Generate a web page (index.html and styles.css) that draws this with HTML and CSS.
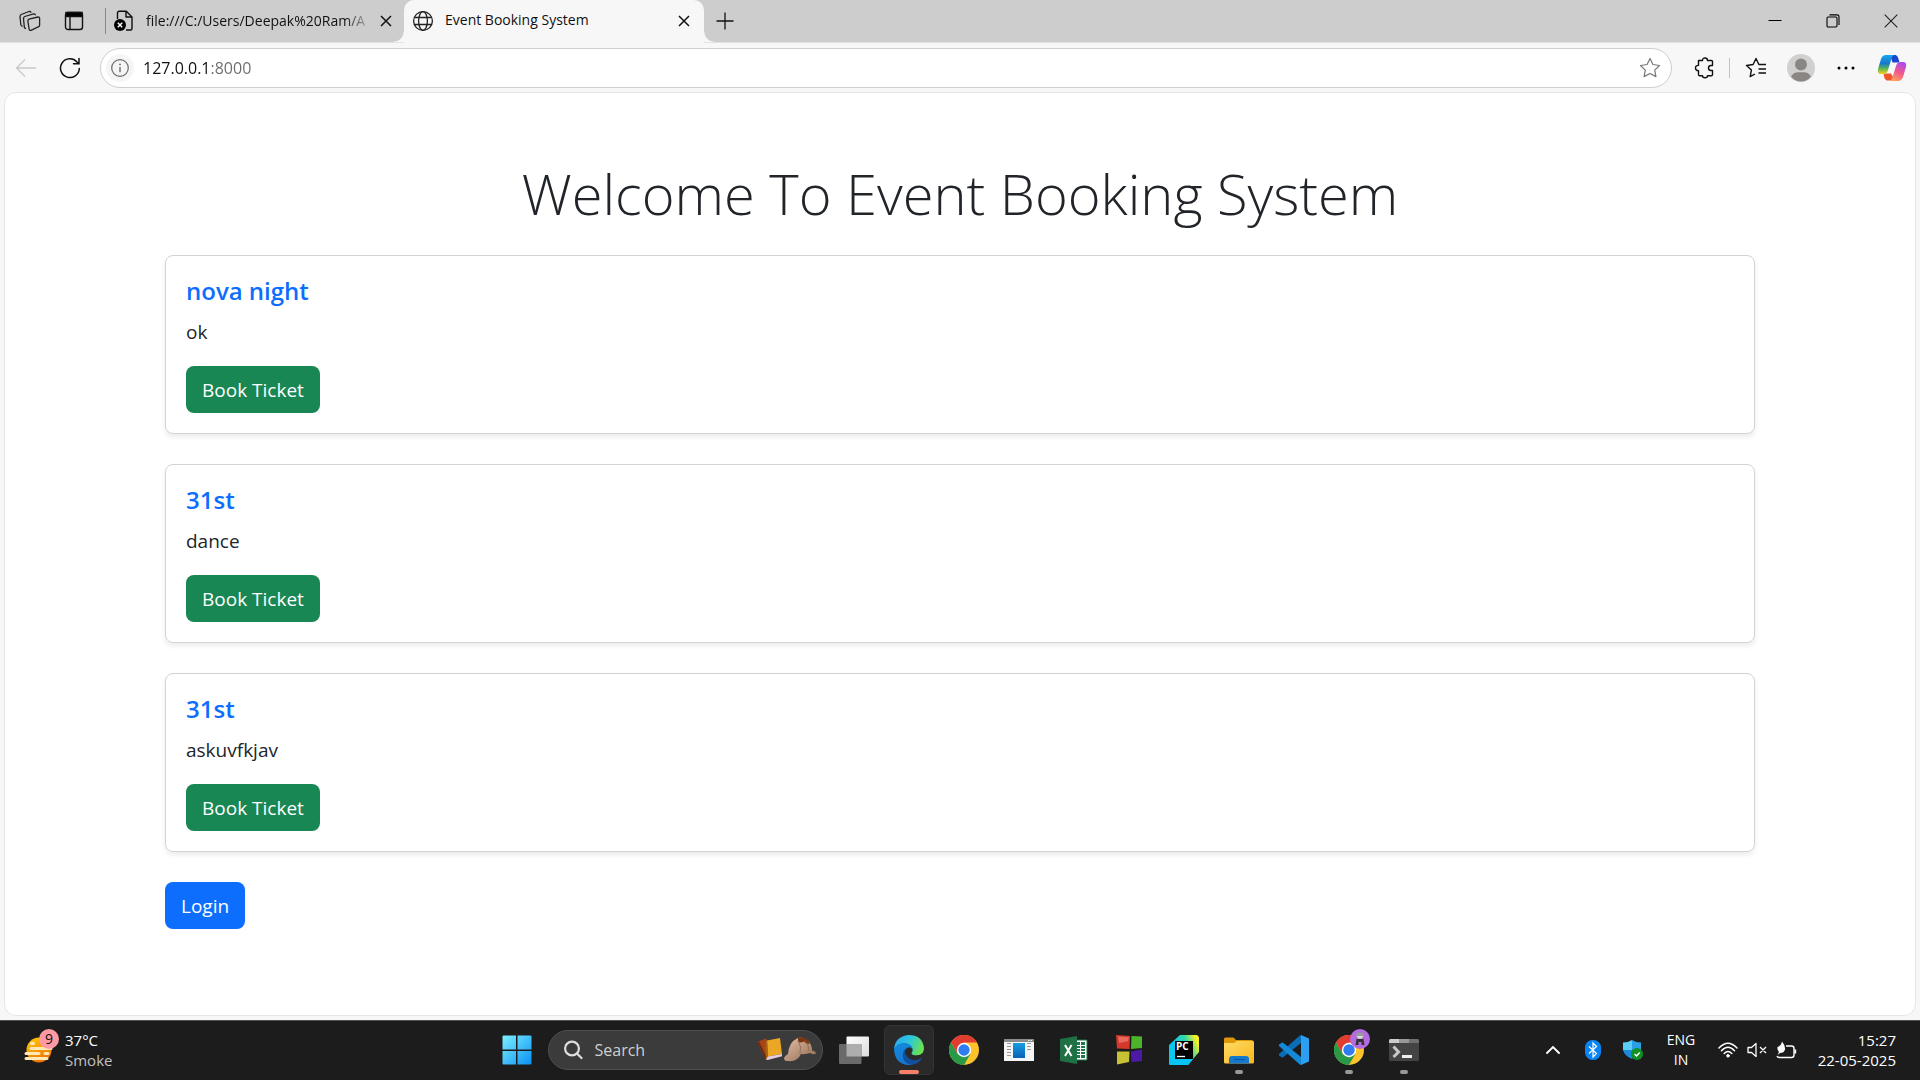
FILE: index.html
```
<!DOCTYPE html>
<html lang="en">
<head>
<meta charset="utf-8">
<meta name="viewport" content="width=device-width, initial-scale=1">
<title>Event Booking System</title>
<link rel="stylesheet" href="styles.css">
</head>
<body>
<header class="browser">
  <div class="tab-strip">
    <button class="icon-btn strip-btn" aria-label="Workspaces">
      <svg width="22" height="22" viewBox="0 0 22 22" fill="none" stroke="#222" stroke-width="1.3" stroke-linejoin="round" stroke-linecap="round"><path d="M10 9.2 19 7q1.6-.2 1.6 1.200v7q0 1-.9 1.500L12 20.300q-1.500.4-1.800-1l-1.300-8q-.1-1.500 1.100-2.100zM6.500 18.500Q5.500 18 5.300 17L4.500 8.500q0-1.500 1.300-2l8.700-2.600q1.300-.2 1.800.9M3 16.200Q2 15.700 1.800 14.500L1 6.500Q1 5 2.200 4.500L10 1.500q1.300-.3 1.900.7"/></svg>
    </button>
    <button class="icon-btn strip-btn" aria-label="Tab actions">
      <svg width="20" height="20" viewBox="0 0 20 20" fill="none" stroke="#111" stroke-width="1.400"><rect x="1.500" y="1.500" width="17" height="17" rx="2.500"/><path d="M2 1.500h16v4H2z" fill="#000"/><path d="M6 6v12"/></svg>
    </button>
    <div class="tab">
      <svg width="22" height="22" viewBox="0 0 22 22" fill="none" stroke="#111" stroke-width="1.400" stroke-linejoin="round"><path d="M4.500 9V3q0-1.800 1.800-1.800h7L19 7v11.500q0 1.500-1.500 1.500H13M13 1.500V7h6"/><circle cx="7" cy="15" r="6" fill="#000" stroke="none"/><path d="m4.800 12.800 4.400 4.400m0-4.400-4.400 4.400" stroke="#fff"/></svg>
      <span class="tab-title tab-title-cut">file:///C:/Users/Deepak%20Ram/A</span>
      <button class="icon-btn tab-close" aria-label="Close tab"><svg width="12" height="12" viewBox="0 0 12 12" stroke="#111" stroke-width="1.500"><path d="m1 1 10 10M11 1 1 11"/></svg></button>
    </div>
    <div class="tab tab-active">
      <svg width="22" height="22" viewBox="0 0 22 22" fill="none" stroke="#222" stroke-width="1.300"><circle cx="11" cy="11" r="9.400"/><ellipse cx="11" cy="11" rx="4.400" ry="9.400"/><path d="M2.500 7.500h17M2.500 14.500h17"/></svg>
      <span class="tab-title">Event Booking System</span>
      <button class="icon-btn tab-close" aria-label="Close tab"><svg width="12" height="12" viewBox="0 0 12 12" stroke="#111" stroke-width="1.500"><path d="m1 1 10 10M11 1 1 11"/></svg></button>
    </div>
    <button class="icon-btn new-tab" aria-label="New tab"><svg width="18" height="18" viewBox="0 0 18 18" stroke="#111" stroke-width="1.300"><path d="M9 .5v17M.5 9h17"/></svg></button>
    <div class="window-controls">
      <button class="icon-btn win-btn" aria-label="Minimize"><svg width="14" height="14" viewBox="0 0 14 14" stroke="#000"><path d="M.5 6.500h13"/></svg></button>
      <button class="icon-btn win-btn" aria-label="Restore"><svg width="14" height="14" viewBox="0 0 14 14" stroke="#000" fill="none" stroke-width="1.100"><rect x="1" y="3" width="10" height="10" rx="1.200"/><path d="M3.500.9H11q2 0 2 2v8"/></svg></button>
      <button class="icon-btn win-btn" aria-label="Close"><svg width="14" height="14" viewBox="0 0 14 14" stroke="#222" stroke-width="1.100"><path d="m.7.7 12.600 12.600m0-12.600L.7 13.300"/></svg></button>
    </div>
  </div>
  <div class="toolbar">
    <button class="icon-btn nav-btn" aria-label="Back" disabled><svg width="22" height="20" viewBox="0 0 22 20" fill="none" stroke="#c9c9c9" stroke-width="1.300"><path d="M21 10H1.500M10 1.500 1.500 10l8.500 8.500"/></svg></button>
    <button class="icon-btn nav-btn" aria-label="Refresh"><svg width="22" height="22" viewBox="0 0 22 22" fill="none" stroke="#111" stroke-width="1.500" stroke-linecap="round"><path d="M20.300 11.500A9.400 9.400 0 1 1 18 5l1.500 1.500M20 1.500v5.200h-5.500"/></svg></button>
    <form class="address">
      <button type="button" class="icon-btn site-info" aria-label="View site information"><svg width="18" height="18" viewBox="0 0 18 18" fill="none" stroke="#6b6b6b" stroke-width="1.200"><circle cx="9" cy="9" r="8.300"/><path d="M9 8v5.200" stroke-width="1.400"/><circle cx="9" cy="5.400" r=".9" fill="#6b6b6b" stroke="none"/></svg></button>
      <input class="address-input" type="text" aria-label="Address" value="127.0.0.1:8000">
      <button type="button" class="icon-btn favorite" aria-label="Add to favorites"><svg width="22" height="22" viewBox="0 0 22 22" fill="none" stroke="#777" stroke-width="1.200" stroke-linejoin="round"><path d="m11 1.500 2.900 6 6.600 1-4.800 4.600 1.200 6.500-5.900-3.100-5.900 3.100 1.200-6.500L1.500 8.500l6.600-1z"/></svg></button>
    </form>
    <div class="toolbar-actions">
      <button class="icon-btn tool-btn" aria-label="Extensions"><svg width="22" height="22" viewBox="0 0 22 22" fill="none" stroke="#111" stroke-width="1.400" stroke-linejoin="round"><path d="M4.500 3.500h4q0-2.500 2.500-2.500t2.500 2.500h4q1 0 1 1v4h-1.500q-2.500 0-2.500 2.500t2.500 2.500h1.500v4q0 1.200-1.200 1.200h-3.800q0 2-2.500 2t-2.500-2H5.700q-1.200 0-1.200-1.200v-3.800Q1.500 13.700 1.500 11t3-2.600z"/></svg></button>
      <span class="tool-separator"></span>
      <button class="icon-btn tool-btn fav-btn" aria-label="Favorites"><svg width="22" height="22" viewBox="0 0 22 22" fill="none" stroke="#111" stroke-width="1.400" stroke-linejoin="round"><path d="M10 17 5.200 19.600l1.200-6.500L1.500 8.500l6.600-1 2.900-6 2.900 6H21M13.500 12H21M13.500 16H21"/></svg></button>
      <button class="icon-btn tool-btn" aria-label="Profile"><svg width="28" height="28" viewBox="0 0 28 28"><circle cx="14" cy="14" r="14" fill="#d2d0ce"/><circle cx="14" cy="10.500" r="6" fill="#8a8683"/><path d="M4 22.500q2.500-4.300 7-4.300h6q4.500 0 7 4.300-4 5-10 5t-10-5z" fill="#8a8683"/></svg></button>
      <button class="icon-btn tool-btn" aria-label="Settings and more"><svg width="18" height="4" viewBox="0 0 18 4"><circle cx="2" cy="2" r="1.500"/><circle cx="9" cy="2" r="1.500"/><circle cx="16" cy="2" r="1.500"/></svg></button>
      <button class="icon-btn tool-btn copilot-btn" aria-label="Copilot">
        <svg width="30" height="28" viewBox="0 0 30 28">
          <defs>
            <linearGradient id="cp1" x1="0" y1="0" x2="0" y2="1"><stop offset="0" stop-color="#1aa5f0"/><stop offset=".45" stop-color="#1778c8"/><stop offset=".7" stop-color="#58b45a"/><stop offset="1" stop-color="#f4cf1c"/></linearGradient>
            <linearGradient id="cp2" x1=".7" y1="0" x2=".3" y2="1"><stop offset="0" stop-color="#a84df0"/><stop offset=".5" stop-color="#f0568e"/><stop offset="1" stop-color="#ffa05c"/></linearGradient>
          </defs>
          <path d="M13 1h5.500q2 .3 2.700 3l1.300 4.500h-7z" fill="#1c45cc"/>
          <path d="M9.500 26.500q-1.500-.8-2.200-3L6.500 19.500h7.500l4 7z" fill="#f0562c"/>
          <path d="M9 1h8q-1.700 1-2.600 4L11 16q-1.300 4-4 4H4q-4 0-3-5L4 5q1.300-4 5-4z" fill="url(#cp1)"/>
          <path d="M21 27h-8q1.700-1 2.600-4L19 12q1.300-4 4-4h3q4 0 3 5l-3 10q-1.300 4-5 4z" fill="url(#cp2)"/>
        </svg>
      </button>
    </div>
  </div>
</header>

<main class="viewport">
  <div class="container">
    <h1 class="page-title">Welcome To Event Booking System</h1>
    <article class="card">
      <h2 class="card-title">nova night</h2>
      <p class="card-text">ok</p>
      <button class="btn btn-success">Book Ticket</button>
    </article>
    <article class="card">
      <h2 class="card-title">31st</h2>
      <p class="card-text">dance</p>
      <button class="btn btn-success">Book Ticket</button>
    </article>
    <article class="card">
      <h2 class="card-title">31st</h2>
      <p class="card-text">askuvfkjav</p>
      <button class="btn btn-success">Book Ticket</button>
    </article>
    <a class="btn btn-primary" href="#login">Login</a>
  </div>
</main>

<footer class="taskbar">
  <button class="weather">
    <span class="weather-icon">
      <svg width="30" height="28" viewBox="0 0 30 28"><defs><linearGradient id="sun" x1=".2" y1="0" x2=".7" y2="1"><stop offset="0" stop-color="#ffc80a"/><stop offset="1" stop-color="#f06a08"/></linearGradient></defs><circle cx="15" cy="14" r="12.500" fill="url(#sun)"/><g stroke="#ffe9b5" stroke-width="3" stroke-linecap="round"><path d="M7.500 7.500h2M7 12.500h20M2 17.500h13M21 17.500h3M2 22.500h21"/></g></svg>
      <span class="weather-badge">9</span>
    </span>
    <span class="weather-text"><span>37°C</span><span class="weather-sub">Smoke</span></span>
  </button>

  <nav class="apps" aria-label="Taskbar">
    <button class="icon-btn start" aria-label="Start">
      <svg width="30" height="30" viewBox="0 0 30 30"><defs><linearGradient id="win" x1="0" y1="0" x2="1" y2="1"><stop offset="0" stop-color="#7cf0ff"/><stop offset="1" stop-color="#0a90f5"/></linearGradient></defs><path fill="url(#win)" d="M1.500.5H14v14H.5v-13q0-1 1-1zM15.500.5h13q1 0 1 1v13h-14zM.5 16H14v13.500H1.500q-1 0-1-1zM15.500 16h14v12.500q0 1-1 1h-13z"/></svg>
    </button>
    <label class="search">
      <svg width="20" height="20" viewBox="0 0 20 20" fill="none" stroke="#ddd" stroke-width="2.200" stroke-linecap="round"><circle cx="9" cy="8.500" r="6.900"/><path d="m14 13.500 4.500 4.500"/></svg>
      <input class="search-input" type="search" placeholder="Search" aria-label="Search">
      <svg width="60" height="28" viewBox="0 0 60 28">
        <defs><linearGradient id="hat" x1="0" y1="0" x2="1" y2="1"><stop offset="0" stop-color="#e4c0a8"/><stop offset="1" stop-color="#90684f"/></linearGradient></defs>
        <path d="M1 6 10 2.500l9 16L10 24z" fill="#a8441a"/><path d="m1 6 9 18 1.500-1L3 5.500z" fill="#6d2a10"/>
        <path d="m11 4.500 13-2.500 2 16-14 2.500z" fill="#eaa624"/><path d="m11 4.500-1.500 1L10 23.500l2-3z" fill="#a86512"/><path d="m10 23.500 2-3 14-2.500v2.300L11.500 24z" fill="#e4cfe0"/>
        <path d="M32 18Q33 6 41 2.500q6-2.500 11 2 4 4 4 10 4 1 4 3-3 1.500-6-.5-4 1.500-9 1-3 7-11 7.300-6 0-6-2.500 0-2 4-4.800z" fill="url(#hat)"/><path d="M42 2.200q5-2.800 10 1.800l2 4-4-.5-2-2-3 1-3-.5z" fill="#7a3411"/><path d="M42 4q4 7 2 14M49 4q4 5 4 11" fill="none" stroke="#8c6650" stroke-width=".8"/>
      </svg>
    </label>
    <button class="icon-btn app app-view" aria-label="Task view">
      <svg width="30" height="28" viewBox="0 0 30 28"><defs><linearGradient id="tv" x1="0" y1="0" x2="1" y2="1"><stop offset="0" stop-color="#fff"/><stop offset="1" stop-color="#dcdcdc"/></linearGradient></defs><rect x="7.500" y=".5" width="22.500" height="20" rx="1" fill="url(#tv)"/><rect x="0" y="8" width="22.500" height="20" rx="1" fill="#6a6a6a"/><path d="M7.500 8h15v12.500h-15z" fill="#adadad"/></svg>
    </button>
    <button class="icon-btn app app-current" aria-label="Microsoft Edge">
      <svg width="30" height="30" viewBox="0 0 30 30"><defs><linearGradient id="ed1" x1="0" y1=".2" x2="1" y2=".5"><stop offset="0" stop-color="#2fa8ee"/><stop offset=".5" stop-color="#2cc6dc"/><stop offset="1" stop-color="#6ce34c"/></linearGradient><linearGradient id="ed2" x1="0" y1="0" x2=".4" y2="1"><stop offset="0" stop-color="#138bdc"/><stop offset="1" stop-color="#1577d4"/></linearGradient></defs><path d="M0 14Q1 1.500 14.500 0 28.500 0 30 13q0 7.500-7.500 7.300-5 0-5-2.300 1.800-2 1-4-1.500-4.500-7-5.500Q4 8 0 14z" fill="url(#ed1)"/><path d="M0 14Q3 8 10 8q8 .5 8.800 6-4-3.500-6.800 0Q8 20 13 25q5 4.500 10 2-4 3-8 3Q1 29.500 0 14z" fill="url(#ed2)"/><path d="M13.500 12.300Q9 15.500 12 20q4 6 10 5 3-.5 5.500-2.300.8-.1.500.8Q24 29.700 17 29.500 9 28 8.800 20.500q0-6 4.700-8.200z" fill="#124f9c"/></svg>
      <span class="run-mark run-mark-active"></span>
    </button>
    <button class="icon-btn app" aria-label="Google Chrome">
      <svg width="30" height="30" viewBox="0 0 30 30"><circle cx="15" cy="15" r="15" fill="#fcc32c"/><path d="M2 7.500A15 15 0 0 1 28 7.500H15L8.500 18.800z" fill="#e03c31"/><path d="M2 7.500A15 15 0 0 0 15 30l6.500-11.300h-13z" fill="#279947"/><circle cx="15" cy="15" r="7.200" fill="#fff"/><circle cx="15" cy="15" r="5.700" fill="#2f7df0"/></svg>
    </button>
    <button class="icon-btn app" aria-label="Application window">
      <svg width="30" height="30" viewBox="0 0 30 30"><defs><linearGradient id="wd" x1="0" y1="0" x2="0" y2="1"><stop offset="0" stop-color="#189ce4"/><stop offset="1" stop-color="#0763b5"/></linearGradient></defs><path d="M0 4h30v22H0z" fill="#f5f5f5"/><path d="M0 4h30v3H0z" fill="#8b8b8b"/><path d="M24 5.500h1.500m1 0H28" stroke="#eee"/><path d="M9 8h12v15H9z" fill="url(#wd)"/><path d="M3 8.500h4M3 11.500h4M3 14.500h4M3 17.500h4M3 20.500h4M23 8.500h4M23 11.500h4M23 14.500h4" stroke="#999"/></svg>
    </button>
    <button class="icon-btn app" aria-label="Excel">
      <svg width="28" height="28" viewBox="0 0 28 28"><path d="M15 4h12v20H15z" fill="#fff" stroke="#1f7145"/><path d="M16 6h4v16h-4zM21 6h4v16h-4z" fill="#20774a"/><path d="M16 9.500h9M16 12.500h9M16 15.500h9M16 18.500h9" stroke="#fff"/><path d="M0 3 17 0v28L0 25z" fill="#1f7145"/><path d="m5 9 6.500 11M11.500 9 5 20" stroke="#fff" stroke-width="2"/></svg>
    </button>
    <button class="icon-btn app" aria-label="Colour tiles">
      <svg width="28" height="30" viewBox="0 0 28 30"><path d="m1 0 14 1-.5 13L2 13.500z" fill="#d3382b"/><path d="m16.500 1 10.500.5V13l-11 1z" fill="#4db52c"/><path d="M2 16.500h12.500L14 27 2 29.500z" fill="#c7c235"/><path d="m16 16.500 11-2V26l-10.500 1z" fill="#4b1ba8"/><path d="m3 1.500 11 .8-1 4L4 8z" fill="#e8695b"/></svg>
    </button>
    <button class="icon-btn app" aria-label="PyCharm">
      <svg width="30" height="30" viewBox="0 0 30 30"><defs><linearGradient id="py" x1="0" y1=".5" x2="1" y2=".1"><stop offset=".2" stop-color="#0ac7ed"/><stop offset=".6" stop-color="#35d7a4"/><stop offset=".9" stop-color="#f5ef2c"/></linearGradient></defs><path d="M11 0h17l2 2v15L19 30H1l-1-1V10z" fill="url(#py)"/><path d="M0 24h24L19 30H1l-1-1z" fill="#08c4f4"/><path d="M6 6h18v18H6z"/><path d="M8 21.500h8" stroke="#fff" stroke-width="1.300"/><text class="pc-label" x="7" y="15">PC</text></svg>
    </button>
    <button class="icon-btn app" aria-label="File Explorer">
      <svg width="30" height="30" viewBox="0 0 30 30"><defs><linearGradient id="fo" x1="0" y1="0" x2="1" y2="1"><stop offset="0" stop-color="#ffdc67"/><stop offset="1" stop-color="#f9b61c"/></linearGradient></defs><path d="M0 9V4q0-1.500 1.500-1.500h8L12 5h15q3 0 3 3z" fill="#df9708"/><path d="M0 8h10l3-2h15q2 0 2 2v19q0 1.500-1.500 1.500h-27Q0 28.500 0 27z" fill="url(#fo)"/><path d="M5 28.500V24q0-3 3-3h14q3 0 3 3v4.500z" fill="#1679cf"/><path d="M10 24.500h11" stroke="#09599f" stroke-width="1.200"/></svg>
      <span class="run-mark"></span>
    </button>
    <button class="icon-btn app" aria-label="Visual Studio Code">
      <svg width="30" height="30" viewBox="0 0 30 30"><path d="M22 0v8L3.500 22.800 0 20.500V19L20.500.8z" fill="#0b6cb8"/><path d="M22 30v-8L3.500 7.200 0 9.500V11l20.500 18.200z" fill="#1489d8"/><path d="m22 0 8 3.500v23L22 30z" fill="#2d9ff0"/></svg>
    </button>
    <button class="icon-btn app" aria-label="Google Chrome, second profile">
      <svg width="30" height="30" viewBox="0 0 30 30"><circle cx="15" cy="15" r="15" fill="#fcc32c"/><path d="M2 7.500A15 15 0 0 1 28 7.500H15L8.500 18.800z" fill="#e03c31"/><path d="M2 7.500A15 15 0 0 0 15 30l6.500-11.300h-13z" fill="#279947"/><circle cx="15" cy="15" r="7.200" fill="#fff"/><circle cx="15" cy="15" r="5.700" fill="#2f7df0"/></svg>
      <svg class="profile-badge" width="20" height="20" viewBox="0 0 20 20"><circle cx="10" cy="10" r="10" fill="#b46ae0"/><path d="M6.500 10h7l1 6h-3v-3h-3v3h-3z" fill="#333"/><path d="M6 5.500q0-2 4-2t4 2q-.5 4.500-4 4.500T6 5.500z" fill="#999"/><path d="M7 7h6l-1 2.500H8z" fill="#ddd"/></svg>
      <span class="run-mark"></span>
    </button>
    <button class="icon-btn app" aria-label="Terminal">
      <svg width="30" height="30" viewBox="0 0 30 30"><rect y="4" width="30" height="22" rx="1.500" fill="#444"/><path d="M0 8V5.500Q0 4 1.500 4H10v4z" fill="#ccc"/><path d="M10 4h10v4H10z" fill="#999"/><path d="M20 4h8.500Q30 4 30 5.500V8H20z" fill="#707070"/><path d="m4.500 11.500 5 5.500-5 5" fill="none" stroke="#c8c8c8" stroke-width="3"/><path d="M13 21.500h10" stroke="#eee" stroke-width="3"/></svg>
      <span class="run-mark"></span>
    </button>
  </nav>

  <div class="tray">
    <button class="icon-btn tray-btn" aria-label="Show hidden icons"><svg width="16" height="10" viewBox="0 0 16 10" fill="none" stroke="#fff" stroke-width="1.900" stroke-linecap="round"><path d="m2 8 6-6 6 6"/></svg></button>
    <button class="icon-btn tray-btn" aria-label="Bluetooth"><svg width="16" height="20" viewBox="0 0 16 20"><rect width="16" height="20" rx="7.500" fill="#0a84f5"/><path d="m4 6.500 7.500 7L8 17V3l3.500 3.500-7.500 7" fill="none" stroke="#fff" stroke-width="1.200"/></svg></button>
    <button class="icon-btn tray-btn" aria-label="Windows Security"><svg width="20" height="20" viewBox="0 0 20 20"><path d="M9 0q4 2.500 9 2.500V10H9z" fill="#2aa1e6"/><path d="M9 0Q5 2.500 0 2.500V10h9z" fill="#5ccdf5"/><path d="M0 10h9v9Q1.500 16 0 10z" fill="#1b8ad8"/><path d="M9 10h9q-1 6-9 9z" fill="#1165ad"/><circle cx="14" cy="14" r="6" fill="#109022"/><path d="m11.500 14 2 2 3.200-3.500" fill="none" stroke="#fff" stroke-width="1.400"/></svg></button>
    <button class="tray-text language"><span>ENG</span><span>IN</span></button>
    <button class="icon-btn status" aria-label="Network, volume and battery">
      <svg width="20" height="16" viewBox="0 0 20 16" fill="none" stroke="#fff" stroke-width="1.500" stroke-linecap="round"><path d="M1 6q9-9.500 18 0M3.500 8.800q6.500-7 13 0M6.200 11.500q3.800-4.200 7.600 0"/><circle cx="10" cy="13.800" r="1.300" fill="#fff" stroke-width="1"/></svg>
      <svg width="20" height="16" viewBox="0 0 20 16" fill="none" stroke="#fff" stroke-width="1.300" stroke-linejoin="round"><path d="M1 5.500h3.500L9 1.500v13l-4.500-4H1zM13 5l6 6M19 5l-6 6"/></svg>
      <svg width="21" height="18" viewBox="0 0 21 18" fill="none" stroke="#fff" stroke-width="1.400"><path d="M10 5h5.500Q18 5 18 7.500V14q0 2.500-2.500 2.500H3.500Q1.500 16.500 1 15M19.500 8.500v4"/><path d="M6 .5q3.500 4 3 8Q8 12 4 12l-2.500 2L3 11Q1 9 1.500 6 5 5 6 .5z" fill="#fff" stroke="none"/></svg>
    </button>
    <button class="tray-text clock"><span>15:27</span><span>22-05-2025</span></button>
  </div>
</footer>
</body>
</html>
```
FILE: styles.css
```
*,
*::before,
*::after {
  box-sizing: border-box;
}

body {
  margin: 0;
  min-height: 100vh;
  display: flex;
  flex-direction: column;
  background: #f7f7f7;
  color: #212529;
  font-family: "Open Sans", "Noto Sans", sans-serif;
  font-size: 19px;
}

button,
input {
  font: inherit;
  color: inherit;
}

svg {
  display: block;
  flex: none;
}

.icon-btn {
  display: flex;
  align-items: center;
  justify-content: center;
  flex: none;
  padding: 0;
  border: 0;
  background: none;
}

/* Tab strip */

.tab-strip {
  display: flex;
  align-items: center;
  height: 43px;
  padding-left: 8px;
  background: #cdcdcd;
  border-bottom: 1px solid #e2e2e2;
  color: #111;
  font-size: 14px;
}

.strip-btn {
  width: 44px;
  height: 40px;
}

.tab {
  display: flex;
  align-items: center;
  width: 299px;
  height: 26px;
  margin-left: 9px;
  padding: 0 10px 0 7px;
  border-left: 1px solid #888;
}

.tab-title {
  flex: 1;
  min-width: 0;
  margin-left: 11px;
  padding-bottom: 2px;
  overflow: hidden;
  white-space: nowrap;
}

.tab-title-cut {
  -webkit-mask-image: linear-gradient(90deg, #000 88%, transparent);
  mask-image: linear-gradient(90deg, #000 88%, transparent);
}

.tab-close {
  width: 16px;
  height: 24px;
  margin-left: 6px;
}

.tab-active {
  position: relative;
  align-self: stretch;
  width: 300px;
  height: 43px;
  margin-left: 0;
  padding: 0 12px 2px 8px;
  border: 0;
  border-radius: 10px 10px 0 0;
  background: #f7f7f7;
}

.tab-active::before,
.tab-active::after {
  content: "";
  position: absolute;
  bottom: 1px;
  width: 10px;
  height: 10px;
}

.tab-active::before {
  right: 100%;
  background: radial-gradient(circle at 0 0, transparent 9px, #f7f7f7 10px);
}

.tab-active::after {
  left: 100%;
  background: radial-gradient(circle at 100% 0, transparent 9px, #f7f7f7 10px);
}

.new-tab {
  width: 42px;
  height: 38px;
}

.window-controls {
  display: flex;
  margin-left: auto;
}

.win-btn {
  width: 58px;
  height: 42px;
}

/* Toolbar */

.toolbar {
  display: flex;
  align-items: center;
  height: 49px;
  padding: 0 4px;
}

.nav-btn {
  width: 44px;
  height: 40px;
}

.address {
  display: flex;
  flex: 1;
  align-items: center;
  height: 40px;
  margin-left: 8px;
  padding: 0 10px 0 5px;
  border: 1px solid #cecece;
  border-radius: 20px;
  background: #fff;
}

.site-info {
  width: 28px;
  height: 28px;
  border-radius: 50%;
  background: #f5f5f5;
}

.address-input {
  flex: 1;
  min-width: 0;
  padding: 0;
  margin-left: 9px;
  border: 0;
  outline: 0;
  font-size: 16px;
  color: transparent;
  background: linear-gradient(90deg, #111 68px, #6b6b6b 68px);
  -webkit-background-clip: text;
  background-clip: text;
}

.toolbar-actions {
  display: flex;
  align-items: center;
  margin-left: 10px;
}

.tool-btn {
  width: 45px;
  height: 40px;
}

.tool-separator {
  width: 1px;
  height: 20px;
  margin-left: 2px;
  background: #c4c4c4;
}

.fav-btn {
  margin-left: 3px;
}

.copilot-btn {
  width: 48px;
}

/* Page */

.viewport {
  flex: 1;
  margin: 0 4px 4px;
  padding: 64px 160px;
  border: 1px solid #e6e6e6;
  border-radius: 12px;
  background: #fff;
}

.container {
  max-width: 1590px;
  margin: 0 auto;
}

.page-title {
  margin: 0 0 26px;
  font-size: 56px;
  font-weight: 300;
  line-height: 72px;
  text-align: center;
}

.card {
  margin-bottom: 30px;
  padding: 20px;
  border: 1px solid #d2d3d3;
  border-radius: 8px;
  box-shadow: 0 3px 5px rgba(0, 0, 0, 0.08);
}

.card-title {
  margin: 0 0 10px;
  color: #0d6efd;
  font-size: 24px;
  font-weight: 600;
  line-height: 30px;
}

.card-text {
  margin: 0;
  padding: 1px 0 19px;
  line-height: 30px;
}

.btn {
  display: block;
  width: fit-content;
  padding: 2px 16px 0;
  border: 0;
  border-radius: 8px;
  color: #fff;
  line-height: 45px;
  text-decoration: none;
}

.btn-success {
  background: #198754;
}

.btn-primary {
  background: #0d6efd;
}

/* Taskbar */

.taskbar {
  display: grid;
  grid-template-columns: 1fr auto 1fr;
  align-items: center;
  height: 60px;
  padding-bottom: 2px;
  border-top: 1px solid #505252;
  background: #1c1c1c;
  color: #fff;
  font-size: 15px;
}

.weather {
  display: flex;
  align-items: center;
  justify-self: start;
  gap: 11px;
  padding: 0 0 0 24px;
  border: 0;
  background: none;
  line-height: 20px;
  text-align: left;
}

.weather-icon {
  position: relative;
}

.weather-badge {
  position: absolute;
  top: -7px;
  right: -5px;
  width: 20px;
  height: 20px;
  border-radius: 50%;
  background: #ff99a4;
  color: #111;
  font-size: 14px;
  text-align: center;
}

.weather-text {
  display: flex;
  flex-direction: column;
}

.weather-sub {
  color: #c0c0c0;
}

.apps {
  display: flex;
  align-items: center;
  padding-left: 3px;
}

.start {
  width: 50px;
  height: 50px;
  margin-right: 6px;
}

.search {
  display: flex;
  align-items: center;
  width: 275px;
  height: 40px;
  margin-right: 4px;
  padding: 0 6px 0 14px;
  border: 1px solid #505050;
  border-radius: 20px;
  background: #3b3b3b;
}

.search-input {
  flex: 1;
  min-width: 0;
  margin-left: 12px;
  padding: 0;
  border: 0;
  outline: 0;
  background: none;
  font-size: 16px;
}

.search-input::placeholder {
  color: #cfcfcf;
  opacity: 1;
}

.app {
  position: relative;
  width: 50px;
  height: 50px;
  margin: 0 3px 0 2px;
  border-radius: 6px;
}

.app-current {
  border: 1px solid #343434;
  background: #2a2a2a;
}

.run-mark {
  position: absolute;
  bottom: 1px;
  left: 50%;
  width: 8px;
  height: 4px;
  margin-left: -4px;
  border-radius: 2px;
  background: #999;
}

.run-mark-active {
  bottom: 0;
  width: 20px;
  margin-left: -10px;
  background: #f4806a;
}

.profile-badge {
  position: absolute;
  top: 4px;
  right: 4px;
}

.pc-label {
  fill: #fff;
  font-size: 10px;
  font-weight: 700;
}

.tray {
  display: flex;
  align-items: center;
  justify-self: end;
  padding-right: 24px;
}

.tray-btn {
  width: 40px;
  height: 40px;
}

.tray-text {
  display: flex;
  flex-direction: column;
  padding: 0;
  border: 0;
  background: none;
  line-height: 20px;
}

.language {
  align-items: center;
  width: 56px;
  font-size: 14px;
}

.status {
  gap: 9px;
  width: 92px;
  height: 40px;
  padding-left: 5px;
}

.clock {
  align-items: flex-end;
  width: 95px;
}
```
